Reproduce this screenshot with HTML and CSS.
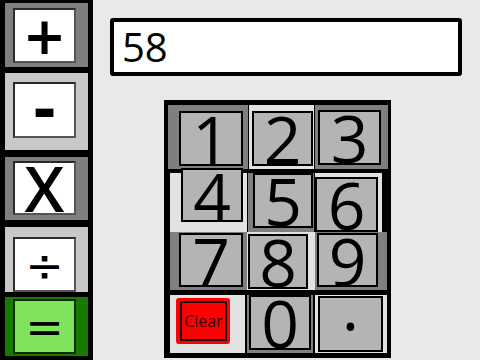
FILE: index.html
```html
<!DOCTYPE html>
<html lang="en">
<head>
    <meta charset="UTF-8">
    <title>Calculator</title>
    <link rel="stylesheet" href="styles.css">
</head>
<body>
    <div class="ops">
        <div class="op op-add dark"><span class="op-face">+</span></div>
        <div class="op op-sub light"><span class="op-face">-</span></div>
        <div class="op op-mul dark"><span class="op-face">X</span></div>
        <div class="op op-div light"><span class="op-face">÷</span></div>
        <div class="op op-eq green"><span class="op-face">=</span></div>
    </div>

    <div class="main">
        <div class="screen">58</div>

        <div class="keypad">
            <div class="row row-1">
                <div class="cell dark"><button class="key">1</button></div>
                <div class="cell light"><button class="key">2</button></div>
                <div class="cell dark"><button class="key">3</button></div>
            </div>
            <div class="row row-2">
                <div class="cell light"><button class="key">4</button></div>
                <div class="cell dark"><button class="key">5</button></div>
                <div class="cell light"><button class="key">6</button></div>
            </div>
            <div class="row row-3">
                <div class="cell dark"><button class="key">7</button></div>
                <div class="cell light"><button class="key">8</button></div>
                <div class="cell dark"><button class="key">9</button></div>
            </div>
            <div class="row row-4">
                <div class="cell light"><button class="clear"><span>Clear</span></button></div>
                <div class="cell dark"><button class="key">0</button></div>
                <div class="cell light"><button class="key key-dot">·</button></div>
            </div>
        </div>
    </div>
</body>
</html>
```

FILE: styles.css
```css
/* page */
body {
    margin: 0;
    display: flex;
    height: 360px;
    overflow: hidden;
    background-color: #e9e9e9;
    font-family: "Open Sans", "Noto Sans", sans-serif;
    color: #000;
}

.dark { background-color: #7f7f7f; }
.light { background-color: #e2e2e2; }
.green { background-color: #1a7a00; }

/* operator column */
.ops {
    width: 93px;
    flex-shrink: 0;
    box-sizing: border-box;
    padding-left: 5px;
    background-color: #000;
    display: flex;
    flex-direction: column;
}

.op {
    width: 83px;
    box-sizing: border-box;
    padding-left: 8px;
}

.op.light { background-color: #c8c8c8; }

.op-face {
    display: flex;
    justify-content: center;
    align-items: center;
    width: 63px;
    height: 55px;
    box-sizing: border-box;
    background-color: #fff;
    border: 2px solid;
    border-color: #2a2a2a #555 #555 #2a2a2a;
    font-family: "DejaVu Sans", sans-serif;
    font-weight: bold;
    line-height: 1;
}

.op-add { margin-top: 3px; height: 64px; padding-top: 5px; }
.op-sub { margin-top: 6px; height: 77px; padding-top: 9px; }
.op-mul { margin-top: 7px; height: 63px; padding-top: 4px; }
.op-div { margin-top: 7px; height: 65px; padding-top: 10px; }
.op-eq  { margin-top: 5px; height: 59px; padding-top: 2px; }

.op-add .op-face { font-size: 52px; }
.op-sub .op-face { font-size: 58px; height: 56px; }
.op-mul .op-face {
    height: 54px;
    font-family: "Open Sans", sans-serif;
    font-size: 64px;
    font-weight: 600;
}
.op-div .op-face { font-size: 46px; font-weight: normal; }
.op-eq .op-face {
    font-size: 46px;
    font-weight: normal;
    background-color: #80e35c;
    border-color: #0d2a00;
}

/* right side */
.main {
    flex: 1;
}

.screen {
    margin: 18px 0 0 17px;
    width: 352px;
    height: 58px;
    box-sizing: border-box;
    border: 4px solid #000;
    border-radius: 3px;
    background-color: #fff;
    padding-left: 8px;
    font-size: 40px;
    line-height: 50px;
}

/* keypad */
.keypad {
    margin: 24px 0 0 71px;
    width: 227px;
    height: 258px;
    box-sizing: border-box;
    padding-top: 5px;
    background-color: #000;
}

.row {
    display: grid;
}

.row-1 { height: 64px; margin-left: 4px; grid-template-columns: 80px 65px 73px; column-gap: 1px; }
.row-2 { height: 57px; margin: 4px 0 0 6px; grid-template-columns: 77px 66px 67px; column-gap: 1px; }
.row-3 { height: 58px; margin: 2px 0 0 6px; grid-template-columns: 77px 68px 72px; }
.row-4 { height: 58px; margin: 5px 0 0 6px; grid-template-columns: 75px 66px 72px; column-gap: 2px; }

.key {
    display: block;
    padding: 0;
    width: 62px;
    height: 55px;
    box-sizing: border-box;
    border: 2px solid #000;
    background-color: #b4b4b4;
    font-family: "Open Sans", sans-serif;
    font-size: 66px;
    line-height: 45px;
    text-align: center;
    color: #000;
}

.row-1 .cell:nth-child(1) .key { margin: 6px 0 0 11px; width: 64px; }
.row-1 .cell:nth-child(2) .key { margin: 6px 0 0 3px; width: 61px; }
.row-1 .cell:nth-child(3) .key { margin: 5px 0 0 3px; width: 63px; }

.row-2 .cell:nth-child(1) .key { margin: -5px 0 0 11px; width: 62px; height: 54px; }
.row-2 .cell:nth-child(2) .key { margin: 0 0 0 5px; width: 60px; }
.row-2 .cell:nth-child(3) .key { margin: 4px 0 0 0; width: 63px; }

.row-3 .cell:nth-child(1) .key { margin: 1px 0 0 9px; width: 64px; height: 54px; }
.row-3 .cell:nth-child(2) .key { margin: 2px 0 0 1px; width: 60px; }
.row-3 .cell:nth-child(3) .key { margin: 1px 0 0 2px; width: 61px; height: 54px; }

.row-4 .cell:nth-child(2) .key { margin: 0 0 0 2px; width: 62px; }
.row-4 .cell:nth-child(3) .key { margin: 1px 0 0 3px; width: 65px; height: 56px; }

.key-dot {
    line-height: 52px;
}

.clear {
    display: block;
    margin: 3px 0 0 6px;
    padding: 3px 3px 3px 4px;
    width: 54px;
    height: 46px;
    box-sizing: border-box;
    border: none;
    border-radius: 3px;
    background-color: #ff0000;
}

.clear span {
    display: block;
    height: 100%;
    box-sizing: border-box;
    border: 2px solid #1a0000;
    font-family: "Open Sans", sans-serif;
    font-size: 16px;
    line-height: 36px;
    color: #3a0000;
    text-align: center;
}
```
